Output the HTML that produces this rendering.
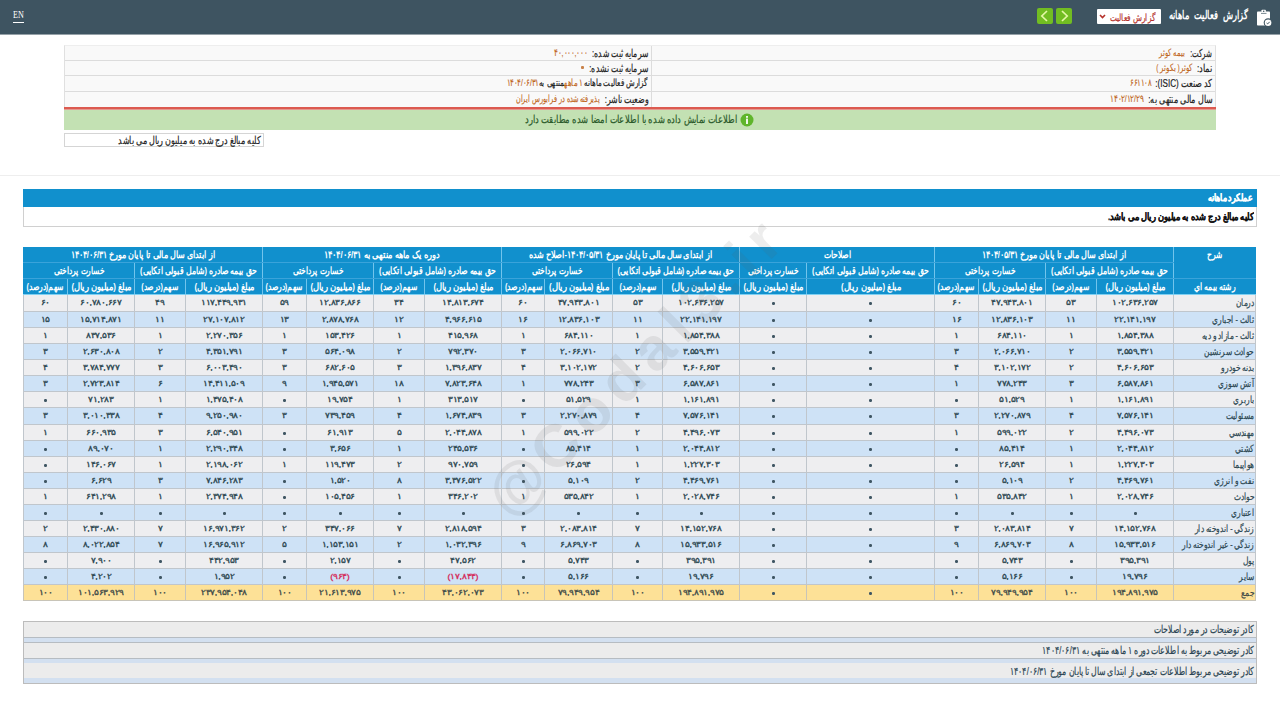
<!DOCTYPE html>
<html lang="fa">
<head>
<meta charset="utf-8">
<title>گزارش فعالیت ماهانه</title>
<style>
*{box-sizing:border-box;margin:0;padding:0}
html,body{width:1280px;height:720px;overflow:hidden;background:#fff;font-family:"Liberation Sans",sans-serif;color:#333}
.abs{position:absolute}
.t{position:absolute;white-space:nowrap;direction:rtl;transform-origin:100% 50%;line-height:12px}
#hdr{position:absolute;left:0;top:0;width:1280px;height:34px;background:#3e5461;box-shadow:0 1px 0 rgba(62,84,97,.55)}
#en{position:absolute;left:13px;top:8.5px;font-family:"Liberation Serif",serif;font-size:9.5px;color:#fff;line-height:12px;transform:scaleX(.85);transform-origin:0 50%}
#enu{position:absolute;left:13px;top:22px;width:11px;height:1px;background:#fff}
#sel{position:absolute;left:1097px;top:9px;width:64px;height:15px;background:#fff;border-radius:1px}
.gb{position:absolute;top:8px;width:16px;height:16px;background:#72bd22;border-radius:2px}
#info{position:absolute;left:64px;top:45px;width:1152px;height:62px;background:#f9f9f9;border-left:1px solid #e0e0e0;border-right:1px solid #e0e0e0;border-top:1px solid #eee}
.irow{position:absolute;left:0;width:1150px;height:15px;border-bottom:1px solid #dcdcdc}
.lab{font-size:11px;color:#222;-webkit-text-stroke:.2px #222}
.val{font-size:9.5px;color:#c0661c;-webkit-text-stroke:.15px #c0661c}
#red{position:absolute;left:64px;top:107px;width:1152px;height:3px;background:linear-gradient(#dc5a50 0,#dc5a50 66%,#e49a90 66%)}
#green{position:absolute;left:64px;top:110px;width:1152px;height:20px;background:#c3e1b3}
#note{position:absolute;left:64px;top:133px;width:200px;height:14px;border:1px solid #d5d5d5;background:#fff}
#sep{position:absolute;left:0;top:175px;width:1280px;height:1px;background:#eee}
#sec{position:absolute;left:23px;top:189px;width:1234px;height:38px;border:1px solid #d0d0d0;background:#fff}
#sech{position:absolute;left:-1px;top:-1px;width:1234px;height:18px;background:#1190cd}
#tbl{position:absolute;left:23px;top:247px;width:1233px;border-collapse:collapse;table-layout:fixed;direction:ltr}
#tbl td{border:1px solid #c0c6cc;text-align:center;white-space:nowrap;font-size:7.8px;font-weight:normal;-webkit-text-stroke:.3px #2b4650;line-height:12px;padding:0;color:#2b4650;direction:rtl}
#tbl tr.h1 td,#tbl tr.h2 td,#tbl tr.h3 td{background:#1190cd;color:#fff;font-weight:bold;-webkit-text-stroke:0;letter-spacing:0;border-color:#3aa3da #72c4ec;font-size:9.5px}
#tbl tr.h1 td{border-top-color:#1190cd}
#tbl tr.h1 td:first-child,#tbl tr.h2 td:first-child,#tbl tr.h3 td:first-child{border-left-color:#1190cd}
#tbl tr.h1 td:last-child,#tbl tr.h3 td:last-child{border-right-color:#1190cd}
#tbl tr.h3 td{border-bottom-color:#7fd0f2}
#tbl tr.o td{background:#eeeef0}
#tbl tr.e td{background:#cee2f6}
#tbl tr.sum td{background:#fde197;border-color:#c8c4b8;color:#3e4a48;-webkit-text-stroke-color:#3e4a48}
#tbl td.nm{text-align:right;padding-right:1px;font-size:9.5px;font-weight:normal;letter-spacing:0;-webkit-text-stroke:.2px #2b4650}
#tbl td.nm div{transform:scaleX(.75);transform-origin:100% 50%}
#tbl td.sh{vertical-align:top;padding-top:1px}
#tbl i.z{display:block;width:3px;height:3px;margin:1px auto 0;background:#3f5663;border-radius:1.2px}
#tbl div.n{transform:scaleX(1.13)}
#tbl td.neg{color:#d42a5a;-webkit-text-stroke-color:#d42a5a}
#bot{position:absolute;left:23px;top:621px;width:1234px;height:63px;border:1px solid #bcbcbc;background:#ececec}
.bstripe{position:absolute;left:0;width:1232px;background:#d3e0f0}
.btxt{font-size:10.5px;color:#2a4452;transform:scaleX(.706);-webkit-text-stroke:.2px #2a4452}
#wm{position:absolute;left:468px;top:478px;font-size:60px;font-weight:bold;letter-spacing:8.7px;color:rgba(90,90,90,.11);transform:rotate(-45deg);transform-origin:0 0;white-space:nowrap;line-height:80px;pointer-events:none}
#wm i{font-style:normal;font-size:60px;font-weight:bold;letter-spacing:4px}
</style>
</head>
<body>
<div id="hdr">
  <div id="en">EN</div><div id="enu"></div>
  <svg class="abs" style="left:1256px;top:8px" width="18" height="20" viewBox="0 0 18 20">
    <rect x="1" y="3.6" width="13" height="14" rx="0.8" fill="#fff"/>
    <rect x="5.6" y="1.7" width="4.2" height="3.4" rx="0.6" fill="#fff"/>
    <circle cx="7.7" cy="3.2" r="0.8" fill="#3e5461"/>
    <path d="M5 5.4 H10.5" stroke="#3e5461" stroke-width="0.7"/>
    <circle cx="12.1" cy="14.7" r="4.4" fill="#3e5461"/>
    <circle cx="12.1" cy="14.7" r="3.3" fill="#fff"/>
    <path d="M10.6 15 L11.7 15.9 L13.7 13.8" stroke="#3e5461" stroke-width="1" fill="none"/>
  </svg>
  <div class="t" style="right:32px;top:9px;font-size:11.5px;font-weight:bold;color:#fff;word-spacing:3px;transform:scaleX(.692)">گزارش فعالیت ماهانه</div>
  <div id="sel"><div class="t" style="right:5px;top:2.5px;font-size:10px;color:#b5302a;transform:scaleX(.735);-webkit-text-stroke:.2px #b5302a">گزارش فعالیت</div>
    <svg class="abs" style="left:2px;top:5px" width="7" height="5" viewBox="0 0 7 5"><path d="M1 1 L3.5 3.6 L6 1" stroke="#b5302a" stroke-width="1.6" fill="none"/></svg>
  </div>
  <div class="gb" style="left:1037px"><svg width="16" height="16" viewBox="0 0 16 16"><path d="M10 3 L4.8 8 L10 13" stroke="#e4f7a6" stroke-width="1.7" fill="none"/></svg></div>
  <div class="gb" style="left:1056px"><svg width="16" height="16" viewBox="0 0 16 16"><path d="M6 3 L11.2 8 L6 13" stroke="#e4f7a6" stroke-width="1.7" fill="none"/></svg></div>
</div>

<div id="info">
  <div class="irow" style="top:0"></div>
  <div class="irow" style="top:15px"></div>
  <div class="irow" style="top:30px;height:16px"></div>
  <div class="irow" style="top:46px;border-bottom:none"></div>
  <div style="position:absolute;left:586px;top:0;width:1px;height:62px;background:#dcdcdc"></div>
</div>
<div class="t lab" style="right:68px;top:47px;transform:scaleX(.64)">شرکت:</div>
<div class="t val" style="right:95.5px;top:47px;transform:scaleX(.667)">بیمه کوثر</div>
<div class="t lab" style="right:68px;top:62px;transform:scaleX(.75)">نماد:</div>
<div class="t val" style="right:87.6px;top:62px;transform:scaleX(.68)">کوثر( بکوثر )</div>
<div class="t lab" style="right:68px;top:77px;transform:scaleX(.736)">کد صنعت (ISIC):</div>
<div class="t val" style="right:129.2px;top:77px;transform:scaleX(.693)">۶۶۱۱۰۸</div>
<div class="t lab" style="right:68px;top:92.5px;transform:scaleX(.726)">سال مالی منتهی به:</div>
<div class="t val" style="right:136.5px;top:92.5px;transform:scaleX(.73)">۱۴۰۲/۱۲/۲۹</div>

<div class="t lab" style="right:631.8px;top:47px;transform:scaleX(.70)">سرمایه ثبت شده:</div>
<div class="t val" style="right:693px;top:47px;transform:scaleX(.728)">۴۰,۰۰۰,۰۰۰</div>
<div class="t lab" style="right:632px;top:62px;transform:scaleX(.70)">سرمایه ثبت نشده:</div>
<div class="abs" style="left:581px;top:66px;width:3px;height:3px;background:#c8824a;border-radius:1px"></div>
<div class="t lab" style="right:632px;top:77px;font-size:10px;transform:scaleX(.71)">گزارش فعالیت ماهانه <span class="val">۱ ماهه</span>منتهی به<span class="val">۱۴۰۴/۰۶/۳۱</span></div>
<div class="t lab" style="right:632px;top:92.5px;transform:scaleX(.72)">وضعیت ناشر:</div>
<div class="t val" style="right:680.3px;top:92.5px;transform:scaleX(.65)">پذیرفته شده در فرابورس ایران</div>

<div id="red"></div>
<div id="green">
  <svg class="abs" style="left:676px;top:3px" width="14" height="14" viewBox="0 0 14 14"><circle cx="7" cy="7" r="6.5" fill="#5fb52b"/><rect x="6.1" y="3" width="1.8" height="1.8" fill="#fff"/><rect x="6.1" y="5.6" width="1.8" height="5.4" fill="#fff"/></svg>
</div>
<div class="t" style="right:542.5px;top:113px;font-size:11px;color:#2a5a2a;transform:scaleX(.76);-webkit-text-stroke:.2px #2a5a2a">اطلاعات نمایش داده شده با اطلاعات امضا شده مطابقت دارد</div>
<div id="note"></div>
<div class="t" style="right:1020px;top:134px;font-size:10.5px;color:#222;transform:scaleX(.73);-webkit-text-stroke:.2px #222">کلیه مبالغ درج شده به میلیون ریال می باشد</div>
<div id="sep"></div>

<div id="sec">
  <div id="sech"></div>
</div>
<div class="t" style="right:27px;top:192px;font-size:9.5px;font-weight:bold;color:#fff;transform:scaleX(.78);-webkit-text-stroke:.35px #fff">عملکرد ماهانه</div>
<div class="t" style="right:26px;top:211px;font-size:9.5px;font-weight:bold;color:#111;transform:scaleX(.83);-webkit-text-stroke:.25px #111">کلیه مبالغ درج شده به میلیون ریال می باشد.</div>

<table id="tbl">
<colgroup><col style="width:44px"><col style="width:67px"><col style="width:51px"><col style="width:77px"><col style="width:44px"><col style="width:67px"><col style="width:51px"><col style="width:77px"><col style="width:43px"><col style="width:68px"><col style="width:50px"><col style="width:77px"><col style="width:67px"><col style="width:128px"><col style="width:44px"><col style="width:67px"><col style="width:51px"><col style="width:77px"><col style="width:82px"></colgroup>
<tr class="h1" style="height:15px"><td colspan="4"><div style="width:124.38%;margin-right:-12.19%;transform:scaleX(0.804)">از ابتدای سال مالی تا پایان مورخ ۱۴۰۴/۰۶/۳۱</div></td><td colspan="4"><div style="width:120.77%;margin-right:-10.39%;transform:scaleX(0.828)">دوره یک ماهه منتهی به ۱۴۰۴/۰۶/۳۱</div></td><td colspan="4"><div style="width:123.76%;margin-right:-11.88%;transform:scaleX(0.808)">از ابتدای سال مالی تا پایان مورخ ۱۴۰۴/۰۵/۳۱-اصلاح شده</div></td><td colspan="2"><div style="width:128.21%;margin-right:-14.10%;transform:scaleX(0.780)">اصلاحات</div></td><td colspan="4"><div style="width:124.38%;margin-right:-12.19%;transform:scaleX(0.804)">از ابتدای سال مالی تا پایان مورخ ۱۴۰۴/۰۵/۳۱</div></td><td rowspan="2" class="sh"><div style="width:133.33%;margin-right:-16.67%;transform:scaleX(0.750)">شرح</div></td></tr>
<tr class="h2" style="height:16px"><td colspan="2"><div style="width:133.33%;margin-right:-16.67%;transform:scaleX(0.750)">خسارت پرداختی</div></td><td colspan="2"><div style="width:128.21%;margin-right:-14.10%;transform:scaleX(0.780)">حق بیمه صادره (شامل قبولی اتکایی)</div></td><td colspan="2"><div style="width:133.33%;margin-right:-16.67%;transform:scaleX(0.750)">خسارت پرداختی</div></td><td colspan="2"><div style="width:128.21%;margin-right:-14.10%;transform:scaleX(0.780)">حق بیمه صادره (شامل قبولی اتکایی)</div></td><td colspan="2"><div style="width:133.33%;margin-right:-16.67%;transform:scaleX(0.750)">خسارت پرداختی</div></td><td colspan="2"><div style="width:128.21%;margin-right:-14.10%;transform:scaleX(0.780)">حق بیمه صادره (شامل قبولی اتکایی)</div></td><td><div style="width:133.33%;margin-right:-16.67%;transform:scaleX(0.750)">خسارت پرداختی</div></td><td><div style="width:128.21%;margin-right:-14.10%;transform:scaleX(0.780)">حق بیمه صادره (شامل قبولی اتکایی)</div></td><td colspan="2"><div style="width:133.33%;margin-right:-16.67%;transform:scaleX(0.750)">خسارت پرداختی</div></td><td colspan="2"><div style="width:128.21%;margin-right:-14.10%;transform:scaleX(0.780)">حق بیمه صادره (شامل قبولی اتکایی)</div></td></tr>
<tr class="h3" style="height:16px"><td><div style="width:130.72%;margin-right:-15.36%;transform:scaleX(0.765)">سهم(درصد)</div></td><td><div style="width:119.47%;margin-right:-9.74%;transform:scaleX(0.837)">مبلغ (میلیون ریال)</div></td><td><div style="width:130.72%;margin-right:-15.36%;transform:scaleX(0.765)">سهم(درصد)</div></td><td><div style="width:119.47%;margin-right:-9.74%;transform:scaleX(0.837)">مبلغ (میلیون ریال)</div></td><td><div style="width:130.72%;margin-right:-15.36%;transform:scaleX(0.765)">سهم(درصد)</div></td><td><div style="width:119.47%;margin-right:-9.74%;transform:scaleX(0.837)">مبلغ (میلیون ریال)</div></td><td><div style="width:130.72%;margin-right:-15.36%;transform:scaleX(0.765)">سهم(درصد)</div></td><td><div style="width:119.47%;margin-right:-9.74%;transform:scaleX(0.837)">مبلغ (میلیون ریال)</div></td><td><div style="width:130.72%;margin-right:-15.36%;transform:scaleX(0.765)">سهم(درصد)</div></td><td><div style="width:119.47%;margin-right:-9.74%;transform:scaleX(0.837)">مبلغ (میلیون ریال)</div></td><td><div style="width:130.72%;margin-right:-15.36%;transform:scaleX(0.765)">سهم(درصد)</div></td><td><div style="width:119.47%;margin-right:-9.74%;transform:scaleX(0.837)">مبلغ (میلیون ریال)</div></td><td><div style="width:119.47%;margin-right:-9.74%;transform:scaleX(0.837)">مبلغ (میلیون ریال)</div></td><td><div style="width:119.47%;margin-right:-9.74%;transform:scaleX(0.837)">مبلغ (میلیون ریال)</div></td><td><div style="width:130.72%;margin-right:-15.36%;transform:scaleX(0.765)">سهم(درصد)</div></td><td><div style="width:119.47%;margin-right:-9.74%;transform:scaleX(0.837)">مبلغ (میلیون ریال)</div></td><td><div style="width:130.72%;margin-right:-15.36%;transform:scaleX(0.765)">سهم(درصد)</div></td><td><div style="width:119.47%;margin-right:-9.74%;transform:scaleX(0.837)">مبلغ (میلیون ریال)</div></td><td><div style="width:129.87%;margin-right:-14.94%;transform:scaleX(0.770)">رشته بيمه اي</div></td></tr>
<tr class="o" style="height:17px"><td><div class="n">۶۰</div></td><td><div class="n">۶۰,۷۸۰,۶۶۷</div></td><td><div class="n">۴۹</div></td><td><div class="n">۱۱۷,۴۴۹,۹۳۱</div></td><td><div class="n">۵۹</div></td><td><div class="n">۱۲,۸۳۶,۸۶۶</div></td><td><div class="n">۳۴</div></td><td><div class="n">۱۴,۸۱۳,۶۷۴</div></td><td><div class="n">۶۰</div></td><td><div class="n">۴۷,۹۴۳,۸۰۱</div></td><td><div class="n">۵۳</div></td><td><div class="n">۱۰۲,۶۳۶,۲۵۷</div></td><td><i class="z"></i></td><td><i class="z"></i></td><td><div class="n">۶۰</div></td><td><div class="n">۴۷,۹۴۳,۸۰۱</div></td><td><div class="n">۵۳</div></td><td><div class="n">۱۰۲,۶۳۶,۲۵۷</div></td><td class="nm"><div>درمان</div></td></tr>
<tr class="e" style="height:16px"><td><div class="n">۱۵</div></td><td><div class="n">۱۵,۷۱۴,۸۷۱</div></td><td><div class="n">۱۱</div></td><td><div class="n">۲۷,۱۰۷,۸۱۲</div></td><td><div class="n">۱۳</div></td><td><div class="n">۲,۸۷۸,۷۶۸</div></td><td><div class="n">۱۲</div></td><td><div class="n">۴,۹۶۶,۶۱۵</div></td><td><div class="n">۱۶</div></td><td><div class="n">۱۲,۸۳۶,۱۰۳</div></td><td><div class="n">۱۱</div></td><td><div class="n">۲۲,۱۴۱,۱۹۷</div></td><td><i class="z"></i></td><td><i class="z"></i></td><td><div class="n">۱۶</div></td><td><div class="n">۱۲,۸۳۶,۱۰۳</div></td><td><div class="n">۱۱</div></td><td><div class="n">۲۲,۱۴۱,۱۹۷</div></td><td class="nm"><div>ثالث - اجباري</div></td></tr>
<tr class="o" style="height:16px"><td><div class="n">۱</div></td><td><div class="n">۸۳۷,۵۳۶</div></td><td><div class="n">۱</div></td><td><div class="n">۲,۲۷۰,۳۵۶</div></td><td><div class="n">۱</div></td><td><div class="n">۱۵۳,۴۲۶</div></td><td><div class="n">۱</div></td><td><div class="n">۴۱۵,۹۶۸</div></td><td><div class="n">۱</div></td><td><div class="n">۶۸۴,۱۱۰</div></td><td><div class="n">۱</div></td><td><div class="n">۱,۸۵۴,۳۸۸</div></td><td><i class="z"></i></td><td><i class="z"></i></td><td><div class="n">۱</div></td><td><div class="n">۶۸۴,۱۱۰</div></td><td><div class="n">۱</div></td><td><div class="n">۱,۸۵۴,۳۸۸</div></td><td class="nm"><div>ثالث - مازاد و ديه</div></td></tr>
<tr class="e" style="height:16px"><td><div class="n">۳</div></td><td><div class="n">۲,۶۳۰,۸۰۸</div></td><td><div class="n">۲</div></td><td><div class="n">۴,۳۵۱,۷۹۱</div></td><td><div class="n">۳</div></td><td><div class="n">۵۶۴,۰۹۸</div></td><td><div class="n">۲</div></td><td><div class="n">۷۹۲,۳۷۰</div></td><td><div class="n">۳</div></td><td><div class="n">۲,۰۶۶,۷۱۰</div></td><td><div class="n">۲</div></td><td><div class="n">۳,۵۵۹,۴۲۱</div></td><td><i class="z"></i></td><td><i class="z"></i></td><td><div class="n">۳</div></td><td><div class="n">۲,۰۶۶,۷۱۰</div></td><td><div class="n">۲</div></td><td><div class="n">۳,۵۵۹,۴۲۱</div></td><td class="nm"><div>حوادث سرنشين</div></td></tr>
<tr class="o" style="height:16px"><td><div class="n">۴</div></td><td><div class="n">۳,۷۸۴,۷۷۷</div></td><td><div class="n">۳</div></td><td><div class="n">۶,۰۰۳,۴۹۰</div></td><td><div class="n">۳</div></td><td><div class="n">۶۸۲,۶۰۵</div></td><td><div class="n">۳</div></td><td><div class="n">۱,۳۹۶,۸۳۷</div></td><td><div class="n">۴</div></td><td><div class="n">۳,۱۰۲,۱۷۲</div></td><td><div class="n">۲</div></td><td><div class="n">۴,۶۰۶,۶۵۳</div></td><td><i class="z"></i></td><td><i class="z"></i></td><td><div class="n">۴</div></td><td><div class="n">۳,۱۰۲,۱۷۲</div></td><td><div class="n">۲</div></td><td><div class="n">۴,۶۰۶,۶۵۳</div></td><td class="nm"><div>بدنه خودرو</div></td></tr>
<tr class="e" style="height:16px"><td><div class="n">۳</div></td><td><div class="n">۲,۷۲۳,۸۱۴</div></td><td><div class="n">۶</div></td><td><div class="n">۱۴,۴۱۱,۵۰۹</div></td><td><div class="n">۹</div></td><td><div class="n">۱,۹۴۵,۵۷۱</div></td><td><div class="n">۱۸</div></td><td><div class="n">۷,۸۲۳,۶۴۸</div></td><td><div class="n">۱</div></td><td><div class="n">۷۷۸,۲۴۳</div></td><td><div class="n">۳</div></td><td><div class="n">۶,۵۸۷,۸۶۱</div></td><td><i class="z"></i></td><td><i class="z"></i></td><td><div class="n">۱</div></td><td><div class="n">۷۷۸,۲۴۳</div></td><td><div class="n">۳</div></td><td><div class="n">۶,۵۸۷,۸۶۱</div></td><td class="nm"><div>آتش سوزي</div></td></tr>
<tr class="o" style="height:16px"><td><i class="z"></i></td><td><div class="n">۷۱,۲۸۳</div></td><td><div class="n">۱</div></td><td><div class="n">۱,۴۷۵,۴۰۸</div></td><td><i class="z"></i></td><td><div class="n">۱۹,۷۵۴</div></td><td><div class="n">۱</div></td><td><div class="n">۳۱۳,۵۱۷</div></td><td><i class="z"></i></td><td><div class="n">۵۱,۵۲۹</div></td><td><div class="n">۱</div></td><td><div class="n">۱,۱۶۱,۸۹۱</div></td><td><i class="z"></i></td><td><i class="z"></i></td><td><i class="z"></i></td><td><div class="n">۵۱,۵۲۹</div></td><td><div class="n">۱</div></td><td><div class="n">۱,۱۶۱,۸۹۱</div></td><td class="nm"><div>باربري</div></td></tr>
<tr class="e" style="height:17px"><td><div class="n">۳</div></td><td><div class="n">۳,۰۱۰,۳۳۸</div></td><td><div class="n">۴</div></td><td><div class="n">۹,۲۵۰,۹۸۰</div></td><td><div class="n">۳</div></td><td><div class="n">۷۳۹,۴۵۹</div></td><td><div class="n">۴</div></td><td><div class="n">۱,۶۷۴,۸۳۹</div></td><td><div class="n">۳</div></td><td><div class="n">۲,۲۷۰,۸۷۹</div></td><td><div class="n">۴</div></td><td><div class="n">۷,۵۷۶,۱۴۱</div></td><td><i class="z"></i></td><td><i class="z"></i></td><td><div class="n">۳</div></td><td><div class="n">۲,۲۷۰,۸۷۹</div></td><td><div class="n">۴</div></td><td><div class="n">۷,۵۷۶,۱۴۱</div></td><td class="nm"><div>مسئوليت</div></td></tr>
<tr class="o" style="height:16px"><td><div class="n">۱</div></td><td><div class="n">۶۶۰,۹۳۵</div></td><td><div class="n">۳</div></td><td><div class="n">۶,۵۴۰,۹۵۱</div></td><td><i class="z"></i></td><td><div class="n">۶۱,۹۱۳</div></td><td><div class="n">۵</div></td><td><div class="n">۲,۰۴۴,۸۷۸</div></td><td><div class="n">۱</div></td><td><div class="n">۵۹۹,۰۲۲</div></td><td><div class="n">۲</div></td><td><div class="n">۴,۴۹۶,۰۷۳</div></td><td><i class="z"></i></td><td><i class="z"></i></td><td><div class="n">۱</div></td><td><div class="n">۵۹۹,۰۲۲</div></td><td><div class="n">۲</div></td><td><div class="n">۴,۴۹۶,۰۷۳</div></td><td class="nm"><div>مهندسي</div></td></tr>
<tr class="e" style="height:16px"><td><i class="z"></i></td><td><div class="n">۸۹,۰۷۰</div></td><td><div class="n">۱</div></td><td><div class="n">۲,۲۹۰,۳۴۸</div></td><td><i class="z"></i></td><td><div class="n">۳,۶۵۶</div></td><td><div class="n">۱</div></td><td><div class="n">۲۴۵,۵۳۶</div></td><td><i class="z"></i></td><td><div class="n">۸۵,۴۱۴</div></td><td><div class="n">۱</div></td><td><div class="n">۲,۰۴۴,۸۱۲</div></td><td><i class="z"></i></td><td><i class="z"></i></td><td><i class="z"></i></td><td><div class="n">۸۵,۴۱۴</div></td><td><div class="n">۱</div></td><td><div class="n">۲,۰۴۴,۸۱۲</div></td><td class="nm"><div>کشتي</div></td></tr>
<tr class="o" style="height:16px"><td><i class="z"></i></td><td><div class="n">۱۴۶,۰۶۷</div></td><td><div class="n">۱</div></td><td><div class="n">۲,۱۹۸,۰۶۲</div></td><td><div class="n">۱</div></td><td><div class="n">۱۱۹,۴۷۳</div></td><td><div class="n">۲</div></td><td><div class="n">۹۷۰,۷۵۹</div></td><td><i class="z"></i></td><td><div class="n">۲۶,۵۹۴</div></td><td><div class="n">۱</div></td><td><div class="n">۱,۲۲۷,۳۰۳</div></td><td><i class="z"></i></td><td><i class="z"></i></td><td><i class="z"></i></td><td><div class="n">۲۶,۵۹۴</div></td><td><div class="n">۱</div></td><td><div class="n">۱,۲۲۷,۳۰۳</div></td><td class="nm"><div>هواپيما</div></td></tr>
<tr class="e" style="height:16px"><td><i class="z"></i></td><td><div class="n">۶,۶۲۹</div></td><td><div class="n">۳</div></td><td><div class="n">۷,۸۴۶,۲۸۳</div></td><td><i class="z"></i></td><td><div class="n">۱,۵۲۰</div></td><td><div class="n">۸</div></td><td><div class="n">۳,۳۷۶,۵۲۲</div></td><td><i class="z"></i></td><td><div class="n">۵,۱۰۹</div></td><td><div class="n">۲</div></td><td><div class="n">۴,۴۶۹,۷۶۱</div></td><td><i class="z"></i></td><td><i class="z"></i></td><td><i class="z"></i></td><td><div class="n">۵,۱۰۹</div></td><td><div class="n">۲</div></td><td><div class="n">۴,۴۶۹,۷۶۱</div></td><td class="nm"><div>نفت و انرژي</div></td></tr>
<tr class="o" style="height:16px"><td><div class="n">۱</div></td><td><div class="n">۶۴۱,۲۹۸</div></td><td><div class="n">۱</div></td><td><div class="n">۲,۳۷۴,۹۴۸</div></td><td><i class="z"></i></td><td><div class="n">۱۰۵,۴۵۶</div></td><td><div class="n">۱</div></td><td><div class="n">۳۴۶,۲۰۲</div></td><td><div class="n">۱</div></td><td><div class="n">۵۳۵,۸۴۲</div></td><td><div class="n">۱</div></td><td><div class="n">۲,۰۲۸,۷۴۶</div></td><td><i class="z"></i></td><td><i class="z"></i></td><td><div class="n">۱</div></td><td><div class="n">۵۳۵,۸۴۲</div></td><td><div class="n">۱</div></td><td><div class="n">۲,۰۲۸,۷۴۶</div></td><td class="nm"><div>حوادث</div></td></tr>
<tr class="e" style="height:16px"><td><i class="z"></i></td><td><i class="z"></i></td><td><i class="z"></i></td><td><i class="z"></i></td><td><i class="z"></i></td><td><i class="z"></i></td><td><i class="z"></i></td><td><i class="z"></i></td><td><i class="z"></i></td><td><i class="z"></i></td><td><i class="z"></i></td><td><i class="z"></i></td><td><i class="z"></i></td><td><i class="z"></i></td><td><i class="z"></i></td><td><i class="z"></i></td><td><i class="z"></i></td><td><i class="z"></i></td><td class="nm"><div>اعتباري</div></td></tr>
<tr class="o" style="height:16px"><td><div class="n">۲</div></td><td><div class="n">۲,۴۳۰,۸۸۰</div></td><td><div class="n">۷</div></td><td><div class="n">۱۶,۹۷۱,۳۶۲</div></td><td><div class="n">۲</div></td><td><div class="n">۳۴۷,۰۶۶</div></td><td><div class="n">۷</div></td><td><div class="n">۲,۸۱۸,۵۹۴</div></td><td><div class="n">۳</div></td><td><div class="n">۲,۰۸۳,۸۱۴</div></td><td><div class="n">۷</div></td><td><div class="n">۱۴,۱۵۲,۷۶۸</div></td><td><i class="z"></i></td><td><i class="z"></i></td><td><div class="n">۳</div></td><td><div class="n">۲,۰۸۳,۸۱۴</div></td><td><div class="n">۷</div></td><td><div class="n">۱۴,۱۵۲,۷۶۸</div></td><td class="nm"><div>زندگي - اندوخته دار</div></td></tr>
<tr class="e" style="height:16px"><td><div class="n">۸</div></td><td><div class="n">۸,۰۲۲,۸۵۴</div></td><td><div class="n">۷</div></td><td><div class="n">۱۶,۹۶۵,۹۱۲</div></td><td><div class="n">۵</div></td><td><div class="n">۱,۱۵۳,۱۵۱</div></td><td><div class="n">۲</div></td><td><div class="n">۱,۰۳۲,۳۹۶</div></td><td><div class="n">۹</div></td><td><div class="n">۶,۸۶۹,۷۰۳</div></td><td><div class="n">۸</div></td><td><div class="n">۱۵,۹۳۳,۵۱۶</div></td><td><i class="z"></i></td><td><i class="z"></i></td><td><div class="n">۹</div></td><td><div class="n">۶,۸۶۹,۷۰۳</div></td><td><div class="n">۸</div></td><td><div class="n">۱۵,۹۳۳,۵۱۶</div></td><td class="nm"><div>زندگي - غير اندوخته دار</div></td></tr>
<tr class="o" style="height:16px"><td><i class="z"></i></td><td><div class="n">۷,۹۰۰</div></td><td><i class="z"></i></td><td><div class="n">۴۴۲,۹۵۳</div></td><td><i class="z"></i></td><td><div class="n">۲,۱۵۷</div></td><td><i class="z"></i></td><td><div class="n">۴۷,۵۶۲</div></td><td><i class="z"></i></td><td><div class="n">۵,۷۴۳</div></td><td><i class="z"></i></td><td><div class="n">۳۹۵,۳۹۱</div></td><td><i class="z"></i></td><td><i class="z"></i></td><td><i class="z"></i></td><td><div class="n">۵,۷۴۳</div></td><td><i class="z"></i></td><td><div class="n">۳۹۵,۳۹۱</div></td><td class="nm"><div>پول</div></td></tr>
<tr class="e" style="height:16px"><td><i class="z"></i></td><td><div class="n">۴,۲۰۲</div></td><td><i class="z"></i></td><td><div class="n">۱,۹۵۲</div></td><td><i class="z"></i></td><td class="neg"><div class="n">(۹۶۴)</div></td><td><i class="z"></i></td><td class="neg"><div class="n">(۱۷,۸۴۴)</div></td><td><i class="z"></i></td><td><div class="n">۵,۱۶۶</div></td><td><i class="z"></i></td><td><div class="n">۱۹,۷۹۶</div></td><td><i class="z"></i></td><td><i class="z"></i></td><td><i class="z"></i></td><td><div class="n">۵,۱۶۶</div></td><td><i class="z"></i></td><td><div class="n">۱۹,۷۹۶</div></td><td class="nm"><div>ساير</div></td></tr>
<tr class="sum" style="height:16px"><td><div class="n">۱۰۰</div></td><td><div class="n">۱۰۱,۵۶۳,۹۲۹</div></td><td><div class="n">۱۰۰</div></td><td><div class="n">۲۳۷,۹۵۴,۰۴۸</div></td><td><div class="n">۱۰۰</div></td><td><div class="n">۲۱,۶۱۳,۹۷۵</div></td><td><div class="n">۱۰۰</div></td><td><div class="n">۴۳,۰۶۲,۰۷۳</div></td><td><div class="n">۱۰۰</div></td><td><div class="n">۷۹,۹۴۹,۹۵۴</div></td><td><div class="n">۱۰۰</div></td><td><div class="n">۱۹۴,۸۹۱,۹۷۵</div></td><td><i class="z"></i></td><td><i class="z"></i></td><td><div class="n">۱۰۰</div></td><td><div class="n">۷۹,۹۴۹,۹۵۴</div></td><td><div class="n">۱۰۰</div></td><td><div class="n">۱۹۴,۸۹۱,۹۷۵</div></td><td class="nm"><div>جمع</div></td></tr>
</table>

<div id="bot">
  <div class="bstripe" style="top:15px;height:6px;border-top:1px solid #b6bcc2;border-bottom:1px solid #b6bcc2"></div>
  <div class="bstripe" style="top:36px;height:5px;border-top:1px solid #b6bcc2"></div>
  <div class="bstripe" style="top:56px;height:5px"></div>
</div>
</div>
<div class="t btxt" style="right:26px;top:623px">کادر توضیحات در مورد اصلاحات</div>
<div class="t btxt" style="right:26px;top:644px">کادر توضیحی مربوط به اطلاعات دوره ۱ ماهه منتهی به ۱۴۰۴/۰۶/۳۱</div>
<div class="t btxt" style="right:26px;top:665px">کادر توضیحی مربوط اطلاعات تجمعی از ابتدای سال تا پایان مورخ ۱۴۰۴/۰۶/۳۱</div>
<div id="wm"><i>@</i>Codal3.ir</div>
</body>
</html>
